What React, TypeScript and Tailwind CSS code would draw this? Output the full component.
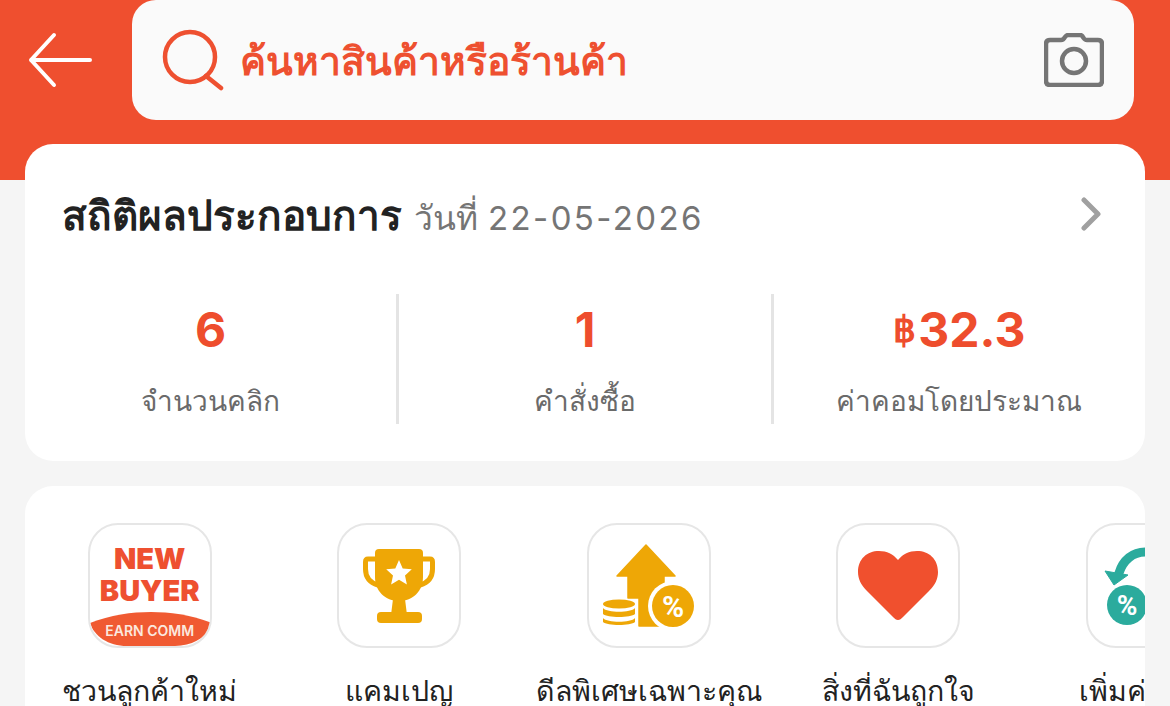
const font = "font-['Roboto','Noto_Sans','Noto_Sans_CJK_SC',sans-serif]";

function BackArrow() {
  return (
    <svg width="66" height="56" viewBox="0 0 66 56" fill="none" stroke="#ffffff" strokeWidth="4" strokeLinecap="round" strokeLinejoin="round">
      <path d="M3 28H62M26 3L3 28L26 53" />
    </svg>
  );
}

function SearchIcon() {
  return (
    <svg width="62" height="62" viewBox="0 0 62 62" fill="none" stroke="#ee5030" strokeWidth="4.5" strokeLinecap="round">
      <circle cx="28" cy="28" r="25" />
      <path d="M44 47L59 59" />
    </svg>
  );
}

function CameraIcon() {
  return (
    <svg width="60" height="54" viewBox="0 0 60 54" fill="none" stroke="#757575" strokeWidth="4.5" strokeLinejoin="round">
      <path d="M6 7H17C19 7 20 6 21 4L22 3C22.6 2.2 23.5 2 24.5 2H36C37 2 37.8 2.4 38.4 3.2L39.6 5C40.4 6.4 41.5 7 43 7H54C56.6 7 58 8.4 58 11V48C58 50.6 56.6 52 54 52H6C3.4 52 2 50.6 2 48V11C2 8.4 3.4 7 6 7Z" />
      <circle cx="30" cy="28" r="12" />
    </svg>
  );
}

function Stat({ value, label, border }: { value: React.ReactNode; label: string; border?: boolean }) {
  return (
    <div className={`flex-1 h-[130px] flex flex-col items-center ${border ? "border-l-[3px] border-[#e4e4e4]" : ""}`}>
      <div className="h-[76px] flex items-center text-[48px] font-bold text-[#ee4d2d] leading-none font-['Inter',sans-serif]">{value}</div>
      <div className="mt-[15px] text-[28px] leading-[44px] text-[#6a6a6a] whitespace-nowrap">{label}</div>
    </div>
  );
}

function NewBuyerIcon() {
  return (
    <div className="relative w-full h-full flex flex-col items-center pt-[18px] overflow-hidden rounded-[28px]">
      <div className="text-[29px] font-black leading-[32px] text-[#ee5030] font-['Inter',sans-serif]">NEW</div>
      <div className="text-[29px] font-black leading-[32px] text-[#ee5030] font-['Inter',sans-serif]">BUYER</div>
      <svg className="absolute left-0 bottom-0" width="122" height="34" viewBox="0 0 122 34">
        <path d="M0 11C20 3 42 0 61 0C80 0 102 3 122 11C118 24 104 34 85 34H37C18 34 4 24 0 11Z" fill="#f05a32" />
      </svg>
      <div className="absolute left-0 right-0 bottom-[7px] text-center text-[14px] font-semibold leading-[16px] text-[#fbe8df] font-['Inter',sans-serif]">EARN COMM</div>
    </div>
  );
}

function TrophyIcon() {
  return (
    <svg width="72" height="74" viewBox="0 0 72 74">
      <path d="M13 10H5Q2.5 10 2.5 13V20C2.5 29 8 34 15 36M59 10H67Q69.5 10 69.5 13V20C69.5 29 64 34 57 36" fill="none" stroke="#eea706" strokeWidth="5" strokeLinecap="round" />
      <path d="M16 0H56Q60 0 60 4V28C60 42 50 52 36 52C22 52 12 42 12 28V4Q12 0 16 0Z" fill="#eea706" />
      <path d="M30 50H42L44 66H28Z" fill="#eea706" />
      <rect x="14" y="63" width="45" height="11" rx="4" fill="#eea706" />
      <path d="M36 11L39.7 19.4L48.8 20.3L42 26.4L43.9 35.4L36 30.8L28.1 35.4L30 26.4L23.2 20.3L32.3 19.4Z" fill="#ffffff" />
    </svg>
  );
}

function DealIcon() {
  return (
    <svg width="92" height="84" viewBox="0 0 92 84">
      <path d="M43 1L72 32H61V82H36V54H25V32H14Z" fill="#eea706" stroke="#eea706" strokeWidth="1.5" strokeLinejoin="round" />
      <circle cx="70" cy="62" r="25" fill="#ffffff" />
      <circle cx="70" cy="62" r="21" fill="#eea706" />
      <text x="70" y="73" textAnchor="middle" fontSize="30" fontWeight="700" fill="#ffffff" fontFamily="Roboto, sans-serif">%</text>
      <ellipse cx="16" cy="60" rx="16" ry="4.5" fill="#eea706" />
      <path d="M0 64C4 69 28 69 32 64V70C28 74 4 74 0 70Z" fill="#eea706" />
      <path d="M0 74C4 79 28 79 32 74V78C28 82 4 82 0 78Z" fill="#eea706" />
    </svg>
  );
}

function HeartIcon() {
  return (
    <svg width="80" height="70" viewBox="0 0 80 70">
      <path d="M40 69C38 69 37 68 35 66L9 40C3 34 0 28 0 21C0 8 9 0 21 0C29 0 35 3 40 9C45 3 51 0 59 0C71 0 80 8 80 21C80 28 77 34 71 40L45 66C43 68 42 69 40 69Z" fill="#f0502e" />
    </svg>
  );
}

function RefundIcon() {
  return (
    <svg width="60" height="80" viewBox="0 0 60 80" className="shrink-0">
      <path d="M41 6C29 6 19 14 15 27" fill="none" stroke="#2bab9d" strokeWidth="9" strokeLinecap="round" />
      <path d="M1 25L24 29L10 39Z" fill="#2bab9d" stroke="#2bab9d" strokeWidth="1" strokeLinejoin="round" />
      <circle cx="23" cy="59" r="20" fill="#2bab9d" />
      <text x="23" y="69" textAnchor="middle" fontSize="28" fontWeight="700" fill="#ffffff" fontFamily="Roboto, sans-serif">%</text>
    </svg>
  );
}

function Shortcut({ icon, label, box }: { icon: React.ReactNode; label: string; box?: string }) {
  return (
    <div className="w-[249.5px] shrink-0 flex flex-col items-center">
      <div className={`w-[124px] h-[125px] shrink-0 rounded-[30px] border-[2px] border-[#e6e6e6] flex items-center ${box ?? "justify-center"}`}>
        {icon}
      </div>
      <div className="mt-[24px] text-[28.5px] leading-[40px] text-[#222222] whitespace-nowrap">{label}</div>
    </div>
  );
}

export default function App() {
  return (
    <div className={`w-[1170px] h-[706px] overflow-hidden bg-[#f5f5f5] ${font}`}>
      <header className="h-[180px] bg-[#ef4f2f] flex items-start pl-[28px] pr-[36px]">
        <div className="w-[104px] h-[120px] shrink-0 flex items-center">
          <BackArrow />
        </div>
        <div className="flex-1 h-[120px] bg-[#fafafa] rounded-[24px] flex items-center pl-[30px] pr-[30px]">
          <SearchIcon />
          <div className="ml-[16px] pt-[4px] flex-1 text-[39px] font-bold text-[#ee5030] whitespace-nowrap">ค้นหาสินค้าหรือร้านค้า</div>
          <CameraIcon />
        </div>
      </header>

      <main className="-mt-[36px] px-[25px] flex flex-col gap-[25px]">
        <section className="h-[317px] bg-white rounded-[28px] pt-[47px]">
          <div className="flex items-center justify-between pl-[37px] pr-[44px] h-[50px]">
            <div className="whitespace-nowrap flex items-baseline">
              <span className="text-[40.5px] font-bold text-[#222222]">สถิติผลประกอบการ</span>
              <span className="ml-[12px] text-[33.5px] text-[#757575]">วันที่</span>
              <span className="ml-[10px] text-[33px] text-[#757575] tracking-[2.4px] font-['Inter',sans-serif]">22-05-2026</span>
            </div>
            <svg className="mb-[4px]" width="20" height="34" viewBox="0 0 20 34" fill="none" stroke="#a0a0a0" strokeWidth="5" strokeLinecap="round" strokeLinejoin="round">
              <path d="M3 3L17 17L3 31" />
            </svg>
          </div>
          <div className="mt-[53px] flex">
            <Stat value="6" label="จำนวนคลิก" />
            <Stat value="1" label="คำสั่งซื้อ" border />
            <Stat
              value={
                <>
                  <span className="text-[36px] mr-[2px] font-['Roboto',sans-serif]">฿</span>32.3
                </>
              }
              label="ค่าคอมโดยประมาณ"
              border
            />
          </div>
        </section>

        <section className="h-[260px] bg-white rounded-[28px] pt-[37px] flex overflow-hidden">
          <Shortcut icon={<NewBuyerIcon />} label="ชวนลูกค้าใหม่" />
          <Shortcut icon={<TrophyIcon />} label="แคมเปญ" />
          <Shortcut icon={<DealIcon />} label="ดีลพิเศษเฉพาะคุณ" />
          <Shortcut icon={<HeartIcon />} label="สิ่งที่ฉันถูกใจ" />
          <Shortcut icon={<RefundIcon />} label="เพิ่มค่าคอม" box="justify-start pl-[16px]" />
        </section>
      </main>
    </div>
  );
}
